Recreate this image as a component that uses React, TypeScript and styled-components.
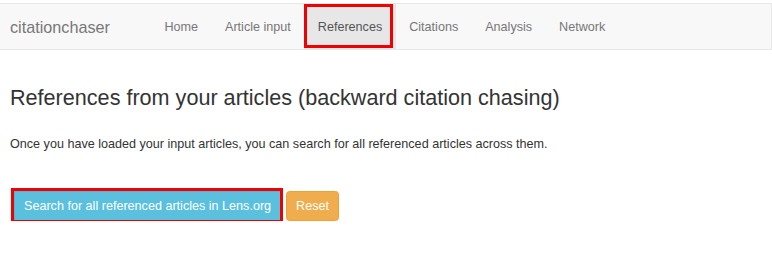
import React from 'react';
import styled, { createGlobalStyle } from 'styled-components';

const GlobalStyle = createGlobalStyle`
  html, body {
    margin: 0;
    padding: 0;
    background: #ffffff;
  }
  body {
    font-family: "Liberation Sans", Arial, sans-serif;
    font-size: 12.6px;
    line-height: 18px;
    color: #333333;
  }
  * {
    box-sizing: border-box;
  }
`;

const Page = styled.div`
  padding-top: 3px;
`;

const Navbar = styled.nav`
  display: flex;
  align-items: stretch;
  height: 47px;
  background-color: #f8f8f8;
  border: 1px solid #e7e7e7;
  border-left: none;
  margin-bottom: 18px;
`;

const Brand = styled.a`
  display: flex;
  align-items: center;
  padding: 0 10px;
  font-size: 16.2px;
  line-height: 18px;
  color: #777777;
  text-decoration: none;
`;

const NavList = styled.ul`
  display: flex;
  list-style: none;
  margin: 0 0 0 31px;
  padding: 0;
`;

const NavLink = styled.a<{ $active?: boolean }>`
  position: relative;
  display: flex;
  align-items: center;
  height: 45px;
  padding: 0 13.5px;
  font-size: 12.6px;
  line-height: 18px;
  color: ${p => (p.$active ? '#555555' : '#777777')};
  background-color: ${p => (p.$active ? '#e7e7e7' : 'transparent')};
  text-decoration: none;

  ${p =>
    p.$active &&
    `
    &::after {
      content: '';
      position: absolute;
      top: 0;
      left: 0;
      right: 3px;
      bottom: 1px;
      border: 3px solid #f00000;
    }
  `}
`;

const Content = styled.main`
  display: flow-root;
  padding: 0 10px;
`;

const Heading = styled.h3`
  margin: 18px 0 25px;
  font-size: 21.6px;
  font-weight: 400;
  line-height: 1.1;
  color: #333333;
`;

const Paragraph = styled.p`
  margin: 0 0 38px;
`;

const ButtonRow = styled.div`
  display: flex;
  align-items: flex-start;
  gap: 5px;
  padding-left: 4px;
`;

const Button = styled.button<{ $variant: 'info' | 'warning'; $marked?: boolean }>`
  position: relative;
  height: 30px;
  padding: 0 9px;
  font-family: "Liberation Sans", Arial, sans-serif;
  font-size: 12.6px;
  line-height: 18px;
  color: #ffffff;
  border-radius: ${p => (p.$marked ? '0' : '3.6px')};
  border: 1px solid ${p => (p.$variant === 'info' ? '#46b8da' : '#eea236')};
  background-color: ${p => (p.$variant === 'info' ? '#5bc0de' : '#f0ad4e')};
  cursor: pointer;

  ${p =>
    p.$marked &&
    `
    &::after {
      content: '';
      position: absolute;
      top: -4px;
      left: -4px;
      right: -3px;
      bottom: -3px;
      border: 3px solid #f00000;
    }
  `}
`;

const links = ['Home', 'Article input', 'References', 'Citations', 'Analysis', 'Network'];

export default function App() {
  return (
    <Page>
      <GlobalStyle />
      <Navbar>
        <Brand href="#">citationchaser</Brand>
        <NavList>
          {links.map(label => (
            <li key={label}>
              <NavLink href="#" $active={label === 'References'}>
                {label}
              </NavLink>
            </li>
          ))}
        </NavList>
      </Navbar>
      <Content>
        <Heading>References from your articles (backward citation chasing)</Heading>
        <Paragraph>
          Once you have loaded your input articles, you can search for all referenced articles across them.
        </Paragraph>
        <ButtonRow>
          <Button $variant="info" $marked>
            Search for all referenced articles in Lens.org
          </Button>
          <Button $variant="warning">Reset</Button>
        </ButtonRow>
      </Content>
    </Page>
  );
}
